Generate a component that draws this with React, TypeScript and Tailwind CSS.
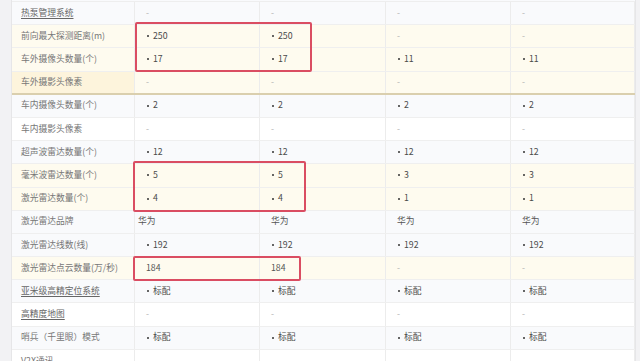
import React from 'react';

type Cell = string;
type Row = {
  label: string;
  values: Cell[];
  tone: 'light' | 'white' | 'cream';
  link?: boolean;
  strong?: boolean;
};

// "•" prefix means a bulleted value, "-" means empty
const rows: Row[] = [
  { label: '热泵管理系统', values: ['-', '-', '-', '-'], tone: 'light', link: true },
  { label: '前向最大探测距离(m)', values: ['•250', '•250', '-', '-'], tone: 'cream' },
  { label: '车外摄像头数量(个)', values: ['•17', '•17', '•11', '•11'], tone: 'cream' },
  { label: '车外摄影头像素', values: ['-', '-', '-', '-'], tone: 'cream', strong: true },
  { label: '车内摄像头数量(个)', values: ['•2', '•2', '•2', '•2'], tone: 'light' },
  { label: '车内摄影头像素', values: ['-', '-', '-', '-'], tone: 'white' },
  { label: '超声波雷达数量(个)', values: ['•12', '•12', '•12', '•12'], tone: 'light' },
  { label: '毫米波雷达数量(个)', values: ['•5', '•5', '•3', '•3'], tone: 'cream' },
  { label: '激光雷达数量(个)', values: ['•4', '•4', '•1', '•1'], tone: 'cream' },
  { label: '激光雷达品牌', values: ['华为', '华为', '华为', '华为'], tone: 'light' },
  { label: '激光雷达线数(线)', values: ['•192', '•192', '•192', '•192'], tone: 'light' },
  { label: '激光雷达点云数量(万/秒)', values: ['184', '184', '-', '-'], tone: 'cream' },
  { label: '亚米级高精定位系统', values: ['•标配', '•标配', '•标配', '•标配'], tone: 'light', link: true },
  { label: '高精度地图', values: ['-', '-', '-', '-'], tone: 'white', link: true },
  { label: '哨兵（千里眼）模式', values: ['•标配', '•标配', '•标配', '•标配'], tone: 'light' },
  { label: 'V2X通讯', values: ['', '', '', ''], tone: 'white' },
];

const toneBg = {
  light: 'bg-[#f9fafc]',
  white: 'bg-white',
  cream: 'bg-[#fefbef]',
};

function Value({ v, col }: { v: Cell; col: number }) {
  if (v === '-') return <span className="text-[#b0b0b0]">-</span>;
  if (v.startsWith('•')) {
    return (
      <span className="flex items-center text-[#4a4a4a]">
        <span className="mr-[4px] ml-[1px] h-[2px] w-[2px] rounded-full bg-[#333333]" />
        {v.slice(1)}
      </span>
    );
  }
  return <span className={v === '华为' && col === 0 ? '-ml-[8px] text-[#555555]' : 'text-[#555555]'}>{v}</span>;
}

function SpecRow({ row }: { row: Row }) {
  return (
    <div
      className={`grid h-[23.2px] shrink-0 grid-cols-[123px_125px_126px_125px_124px] ${toneBg[row.tone]} ${
        row.strong ? 'border-b-2 border-[#dacfae]' : 'border-b border-[#efefef]'
      }`}
    >
      <div
        className={`flex items-center border-r border-[#ececec] pl-[9px] ${
          row.strong ? 'bg-[#fdf4dc]' : ''
        }`}
      >
        <span className={row.link ? 'text-[#666666] underline underline-offset-2' : 'text-[#777777]'}>
          {row.label}
        </span>
      </div>
      {row.values.map((v, i) => (
        <div key={i} className="flex items-center border-r border-[#ececec] pl-[11px]">
          <Value v={v} col={i} />
        </div>
      ))}
    </div>
  );
}

export default function App() {
  return (
    <div
      className="relative flex h-[361px] w-[640px] overflow-hidden bg-[#f2f2f4] text-[8.75px] leading-none"
      style={{ fontFamily: '"Noto Sans CJK SC", "Noto Sans", sans-serif' }}
    >
      <div className="w-[12px] shrink-0 border-r border-[#e6e6e8]" />
      <div className="flex w-[623px] shrink-0 flex-col bg-white">
        <div className="h-[2px] shrink-0 border-b border-[#eeeeee] bg-[#f9fafc]" />
        {rows.map((r) => (
          <SpecRow key={r.label} row={r} />
        ))}
      </div>
      <div className="flex-1 border-l border-[#e6e6e8]" />

      {/* highlight annotations */}
      <div className="absolute left-[135px] top-[22px] h-[50px] w-[177px] rounded-[2px] border-2 border-[#da4d62]" />
      <div className="absolute left-[133px] top-[161px] h-[51px] w-[173px] rounded-[2px] border-2 border-[#da4d62]" />
      <div className="absolute left-[133px] top-[256px] h-[25px] w-[168px] rounded-[2px] border-2 border-[#da4d62]" />
    </div>
  );
}
